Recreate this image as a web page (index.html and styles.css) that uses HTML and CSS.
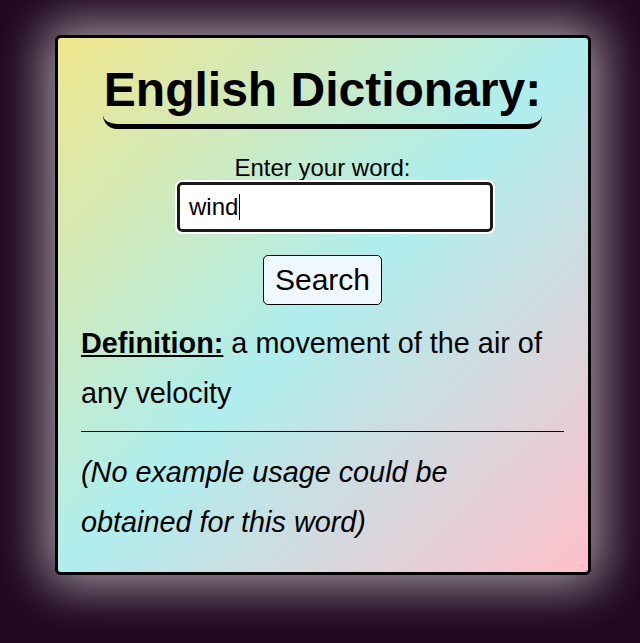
FILE: index.html
```html
<!DOCTYPE html>
<html>
<head>
<meta charset="utf-8">
<link rel="stylesheet" href="styles.css">
</head>
<body>
<main class="card">
  <h1 class="title">English Dictionary:</h1>
  <form class="search">
    <label class="label" for="word">Enter your word:</label>
    <div class="input-box"><span class="typed">wind</span><span class="caret"></span></div>
    <button class="btn" type="button">Search</button>
  </form>
  <p class="definition"><b class="def-label">Definition:</b> a movement of the air of any velocity</p>
  <hr class="rule">
  <p class="example">(No example usage could be obtained for this word)</p>
</main>
</body>
</html>
```
FILE: styles.css
```css
html, body {
  margin: 0;
  padding: 0;
}
body {
  background: #200820;
  font-family: "Liberation Sans", Arial, sans-serif;
  color: #000;
  height: 643px;
  overflow: hidden;
}
.card {
  box-sizing: border-box;
  width: 536px;
  margin: 35px 0 0 55px;
  height: 540px;
  border: 3px solid #000;
  border-radius: 6px;
  background: linear-gradient(to bottom right, khaki, paleturquoise, pink);
  box-shadow: 0 0 50px 10px rgba(255, 255, 255, 0.6);
  padding: 0 24px 0 23px;
  display: flex;
  flex-direction: column;
  align-items: stretch;
}
.title {
  align-self: center;
  margin: 24px 0 0;
  font-size: 48px;
  font-weight: bold;
  line-height: 55px;
  padding: 0 1px 7px;
  border-bottom: 5px solid #000;
  border-radius: 0 0 14px 14px;
}
.search {
  display: flex;
  flex-direction: column;
  align-items: center;
  margin-top: 25px;
}
.label {
  font-size: 24px;
  line-height: 28px;
}
.input-box {
  box-sizing: border-box;
  width: 316px;
  height: 50px;
  margin: 0 0 0 25px;
  background: #fff;
  border: 3px solid #1a1a1a;
  border-radius: 5px;
  outline: 2px solid #fff;
  display: flex;
  align-items: center;
  padding-left: 9px;
  font-size: 24px;
}
.caret {
  display: inline-block;
  width: 1px;
  height: 26px;
  background: #000;
  margin-left: 1px;
}
.btn {
  margin-top: 23px;
  width: 119px;
  height: 50px;
  background: aliceblue;
  border: 1px solid #000;
  border-radius: 5px;
  font-family: "Liberation Sans", Arial, sans-serif;
  font-size: 30px;
  color: #000;
  padding: 0;
}
.definition {
  margin: 13px 0 0;
  font-size: 28.8px;
  line-height: 50px;
}
.def-label {
  text-decoration: underline;
}
.rule {
  margin: 13px 0 0;
  border: 0;
  border-top: 1px solid #000;
  height: 0;
}
.example {
  margin: 15px 0 0;
  font-size: 28.8px;
  line-height: 50px;
  font-style: italic;
}
```
